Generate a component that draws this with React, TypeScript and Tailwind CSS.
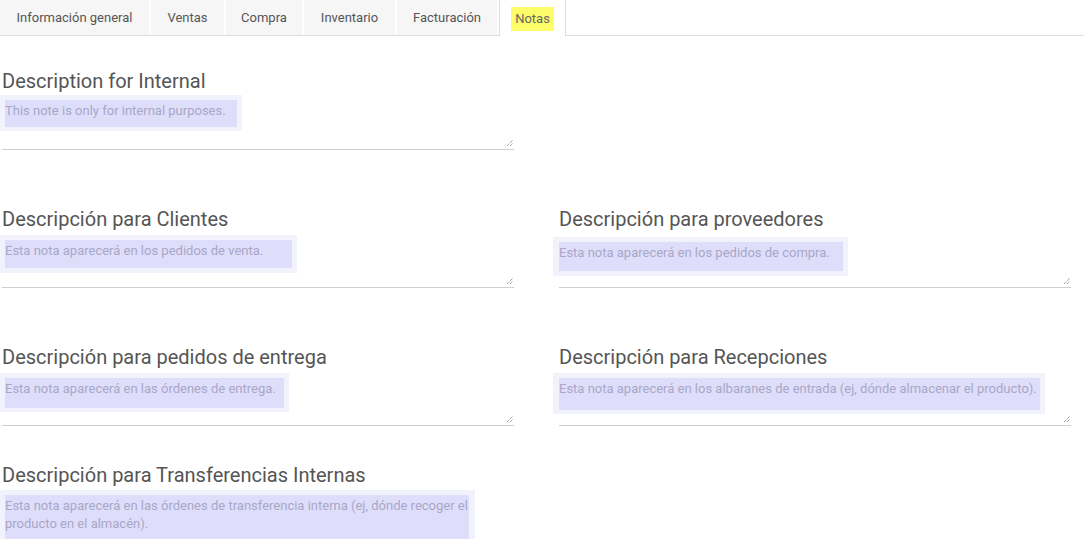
import React from 'react';

const TABS = [
  { label: 'Información general', w: 'w-[149px]' },
  { label: 'Ventas', w: 'w-[73px]' },
  { label: 'Compra', w: 'w-[76px]' },
  { label: 'Inventario', w: 'w-[91px]' },
  { label: 'Facturación', w: 'w-[100px]' },
];

// resize grip drawn in the bottom-right corner of each note field
const Grip = () => (
  <svg className="absolute right-0 bottom-[2px]" width="8" height="8" viewBox="0 0 8 8">
    <line x1="1" y1="7" x2="7" y2="1" stroke="#777" strokeWidth="1" strokeDasharray="1 1" />
    <line x1="4" y1="7" x2="7" y2="4" stroke="#777" strokeWidth="1" strokeDasharray="1 1" />
  </svg>
);

interface NoteProps {
  title: string;
  text: React.ReactNode;
  outer: string;
  inner: string;
  field?: string;
}

const Note: React.FC<NoteProps> = ({ title, text, outer, inner, field = 'h-[55px]' }) => (
  <div className="w-[512px]">
    <h3 className="text-[20px] leading-[28px] text-[#555] font-normal">{title}</h3>
    <div className={`relative border-b border-[#cfcfcf] ${field}`}>
      <div className={`absolute bg-[#f2f2fc] ${outer}`} />
      <div className={`absolute bg-[#dfdefa] ${inner}`} />
      <p className={`absolute pt-[2px] text-[13px] leading-[18px] text-[#a8a7c8] ${inner}`}>{text}</p>
      <Grip />
    </div>
  </div>
);

export default function App() {
  return (
    <div className="w-[1084px] h-[539px] overflow-hidden bg-white font-['Roboto',sans-serif]">
      {/* Tabs */}
      <div className="flex h-[36px] border-b border-[#dddddd]">
        {TABS.map(t => (
          <div
            key={t.label}
            className={`h-[35px] mr-[2px] flex items-center justify-center bg-[#f6f6f6] text-[13px] text-[#555] ${t.w}`}
          >
            {t.label}
          </div>
        ))}
        <div className="h-[36px] w-[67px] -mb-px flex items-center justify-center bg-white border-x border-[#dddddd] text-[13px] text-[#666]">
          <span className="bg-[#fdfd6a] px-[4px] py-[2px] mt-[2px]">Notas</span>
        </div>
      </div>

      {/* Notes */}
      <div className="pl-[2px] pt-[31px] flex flex-col">
        <Note
          title="Description for Internal"
          text="This note is only for internal purposes."
          outer="-left-[2px] top-0 w-[242px] h-[36px]"
          inner="left-[3px] top-[5px] w-[232px] h-[27px]"
        />

        <div className="flex gap-[45px] mt-[55px]">
          <Note
            title="Descripción para Clientes"
            text="Esta nota aparecerá en los pedidos de venta."
            outer="-left-[2px] top-[2px] w-[297px] h-[38px]"
            inner="left-[3px] top-[7px] w-[287px] h-[28px]"
          />
          <Note
            title="Descripción para proveedores"
            text="Esta nota aparecerá en los pedidos de compra."
            outer="-left-[6px] top-[4px] w-[295px] h-[39px]"
            inner="left-0 top-[9px] w-[284px] h-[29px]"
          />
        </div>

        <div className="flex gap-[45px] mt-[55px]">
          <Note
            title="Descripción para pedidos de entrega"
            text="Esta nota aparecerá en las órdenes de entrega."
            outer="-left-[2px] top-[2px] w-[289px] h-[39px]"
            inner="left-[3px] top-[7px] w-[279px] h-[30px]"
          />
          <Note
            title="Descripción para Recepciones"
            text="Esta nota aparecerá en los albaranes de entrada (ej, dónde almacenar el producto)."
            outer="-left-[6px] top-[2px] w-[492px] h-[41px]"
            inner="left-0 top-[7px] w-[481px] h-[32px]"
          />
        </div>

        <div className="mt-[35px]">
          <Note
            title="Descripción para Transferencias Internas"
            text="Esta nota aparecerá en las órdenes de transferencia interna (ej, dónde recoger el producto en el almacén)."
            outer="-left-[2px] top-[1px] w-[475px] h-[60px]"
            inner="left-[3px] top-[6px] w-[464px] h-[50px]"
            field="h-[60px]"
          />
        </div>
      </div>
    </div>
  );
}
